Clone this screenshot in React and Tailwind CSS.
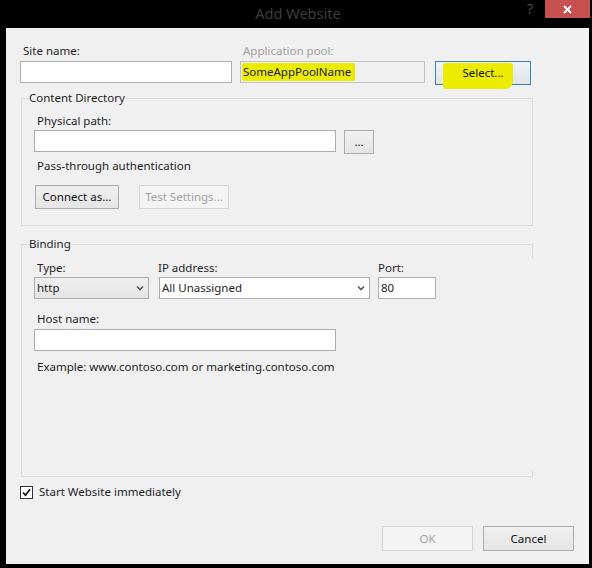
import React from 'react';

const font = { fontFamily: '"Noto Sans", "Segoe UI", Arial, sans-serif' };

function Btn({ children, className = '', disabled }) {
  return (
    <div
      className={
        'flex items-center justify-center h-[24px] border ' +
        (disabled
          ? 'border-[#d5d5d5] bg-[#f4f4f4] text-[#a3a3a3] '
          : 'border-[#acacac] bg-gradient-to-b from-[#f0f0f0] to-[#e5e5e5] text-[#111] ') +
        className
      }
    >
      {children}
    </div>
  );
}

function Chevron() {
  return (
    <svg width="8" height="6" viewBox="0 0 8 6" className="mr-[4px]">
      <path d="M1 1.5 L4 4.5 L7 1.5" fill="none" stroke="#555" strokeWidth="1.6" />
    </svg>
  );
}

export default function App() {
  return (
    <div className="w-[592px] h-[568px] bg-black text-[11.5px] leading-[16px] text-[#1e1e1e]" style={font}>
      {/* title bar */}
      <div className="relative h-[28px] flex items-center justify-center">
        <span className="text-[14.5px] text-[#3c3c3c] ml-[4px] mt-[-2px]">Add Website</span>
        <span className="absolute left-[527px] top-[1px] text-[14px] text-[#4a4a4a]">?</span>
        <div className="absolute left-[545px] top-0 w-[45px] h-[18px] bg-[#c75050] flex items-center justify-center">
          <svg width="9" height="9" viewBox="0 0 9 9">
            <path d="M1 1 L8 8 M8 1 L1 8" stroke="#fff" strokeWidth="1.8" />
          </svg>
        </div>
      </div>

      {/* dialog body */}
      <div className="ml-[6px] w-[583px] h-[536px] bg-[#f0f0f0] flex flex-col">
        {/* site / app pool row */}
        <div className="flex items-start pt-[15px] pl-[14px]">
          <div className="flex flex-col">
            <span className="ml-[3px] h-[16px]">Site name:</span>
            <div className="mt-[2px] w-[212px] h-[22px] bg-white border border-[#abadb3]" />
          </div>
          <div className="flex flex-col ml-[8px]">
            <span className="ml-[3px] h-[16px] text-[#a0a0a0]">Application pool:</span>
            <div className="relative mt-[2px] w-[185px] h-[22px] bg-[#f0f0f0] border border-[#c3c3c3] flex items-center">
              <span className="absolute left-[1px] top-[1px] w-[113px] h-[18px] bg-[#ecec00] rounded-[2px]" />
              <span className="relative pl-[2px] text-[#202020]">SomeAppPoolName</span>
            </div>
          </div>
          <div className="mt-[18px] ml-[10px] relative">
            <div className="w-[96px] h-[24px] border border-[#3c7fb1] bg-gradient-to-b from-[#eef3f8] to-[#e2e5e8]" />
            <span className="absolute left-[8px] top-[2px] w-[70px] h-[26px] bg-[#ecec00] rounded-[3px] rounded-br-[8px]" />
            <span className="absolute inset-x-0 top-0 h-[24px] flex items-center justify-center text-[#111]">
              Select...
            </span>
          </div>
        </div>

        {/* content directory */}
        <div className="relative mt-[13px] ml-[15px] w-[512px] h-[128px] border border-[#dcdcdc] pl-[12px]">
          <span className="absolute left-[6px] top-[-9px] px-[1px] bg-[#f0f0f0]">Content Directory</span>
          <div className="pt-[14px] ml-[3px] h-[31px]">Physical path:</div>
          <div className="flex items-start">
            <div className="w-[302px] h-[22px] bg-white border border-[#abadb3]" />
            <Btn className="ml-[8px] w-[30px]">...</Btn>
          </div>
          <div className="mt-[4px] ml-[3px]">Pass-through authentication</div>
          <div className="mt-[11px] flex ml-[1px]">
            <Btn className="w-[84px]">Connect as...</Btn>
            <Btn disabled className="ml-[20px] w-[90px]">Test Settings...</Btn>
          </div>
        </div>

        {/* binding */}
        <div className="relative mt-[18px] ml-[15px] w-[512px] h-[233px] border-t border-l border-b border-[#dcdcdc] pl-[12px]">
          <span className="absolute left-[6px] top-[-9px] px-[1px] bg-[#f0f0f0]">Binding</span>
          <span className="absolute right-0 top-0 w-px h-[14px] bg-[#dcdcdc]" />
          <span className="absolute right-0 bottom-0 w-px h-[5px] bg-[#dcdcdc]" />
          <div className="pt-[15px] flex items-start">
            <div className="flex flex-col">
              <span className="ml-[3px] h-[16px]">Type:</span>
              <div className="mt-[1px] w-[115px] h-[22px] border border-[#acacac] bg-gradient-to-b from-[#f0f0f0] to-[#e5e5e5] flex items-center justify-between pl-[2px]">
                <span>http</span>
                <Chevron />
              </div>
            </div>
            <div className="flex flex-col ml-[10px]">
              <span className="ml-[-1px] h-[16px]">IP address:</span>
              <div className="mt-[1px] w-[211px] h-[22px] border border-[#acacac] bg-white flex items-center justify-between pl-[2px]">
                <span>All Unassigned</span>
                <Chevron />
              </div>
            </div>
            <div className="flex flex-col ml-[8px]">
              <span className="h-[16px]">Port:</span>
              <div className="mt-[1px] w-[58px] h-[22px] border border-[#abadb3] bg-white flex items-center pl-[2px]">
                80
              </div>
            </div>
          </div>
          <div className="mt-[12px] ml-[3px]">Host name:</div>
          <div className="mt-[2px] w-[302px] h-[22px] bg-white border border-[#abadb3]" />
          <div className="mt-[8px] ml-[3px]">Example: www.contoso.com or marketing.contoso.com</div>
        </div>

        {/* checkbox */}
        <div className="mt-[7px] ml-[14px] flex items-center h-[16px]">
          <div className="w-[13px] h-[13px] border border-[#333] bg-white flex items-center justify-center">
            <svg width="9" height="9" viewBox="0 0 9 9">
              <path d="M1 4.5 L3.5 7.2 L8 1.2" fill="none" stroke="#111" strokeWidth="1.7" />
            </svg>
          </div>
          <span className="ml-[6px]">Start Website immediately</span>
        </div>

        {/* footer buttons */}
        <div className="mt-[26px] flex justify-end pr-[15px]">
          <Btn disabled className="w-[91px] h-[25px]">OK</Btn>
          <Btn className="ml-[10px] w-[91px] h-[25px]">Cancel</Btn>
        </div>
      </div>
    </div>
  );
}
